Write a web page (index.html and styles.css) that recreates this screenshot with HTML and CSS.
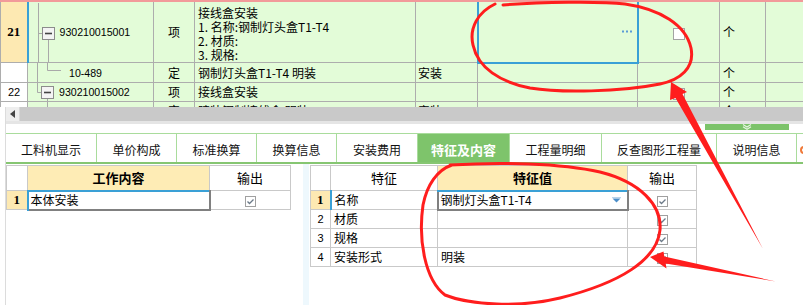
FILE: index.html
```html
<!DOCTYPE html>
<html>
<head>
<meta charset="utf-8">
<link rel="stylesheet" href="styles.css">
</head>
<body>
<div class="app">
  <div class="grid-wrap">
    <table class="grid">
      <colgroup>
        <col style="width:27px"><col style="width:126px"><col style="width:41px"><col style="width:221px"><col style="width:62px"><col style="width:160px"><col style="width:82px"><col style="width:46px"><col style="width:38px">
      </colgroup>
      <tr class="h60">
        <td class="num cur">21</td>
        <td class="tree"><div class="tc">
          <svg class="tl" width="31" height="59" viewBox="0 0 31 59">
            <line x1="9.5" y1="0" x2="9.5" y2="59"/>
            <line x1="9.5" y1="30.5" x2="13" y2="30.5"/>
            <line x1="19.5" y1="36" x2="19.5" y2="59"/>
            <rect class="bx" x="13.5" y="24.5" width="12" height="12"/>
            <line class="mn" x1="16" y1="30.5" x2="23" y2="30.5"/>
          </svg><span class="code">930210015001</span></div></td>
        <td class="ctr">项</td>
        <td class="desc"><div class="dl">接线盒安装</div><div class="dl">1. 名称:钢制灯头盒T1-T4</div><div class="dl">2. 材质:</div><div class="dl">3. 规格:</div></td>
        <td></td>
        <td class="sel"><div class="dots"><svg width="12" height="3" viewBox="0 0 12 3"><rect x="0" y="0.5" width="2" height="2"/><rect x="4" y="0.5" width="2" height="2"/><rect x="8" y="0.5" width="2" height="2"/></svg></div></td>
        <td class="ctr"><span class="cb0"></span></td>
        <td>个</td>
        <td></td>
      </tr>
      <tr class="h20">
        <td class="num"></td>
        <td class="tree"><div class="tc">
          <svg class="tl" width="41" height="19" viewBox="0 0 41 19">
            <line x1="9.5" y1="0" x2="9.5" y2="19"/>
            <line x1="19.5" y1="0" x2="19.5" y2="7.5"/>
            <line x1="19.5" y1="7.5" x2="33" y2="7.5"/>
          </svg><span class="code">10-489</span></div></td>
        <td class="ctr">定</td>
        <td>钢制灯头盒T1-T4 明装</td>
        <td class="pl2">安装</td>
        <td></td>
        <td></td>
        <td>个</td>
        <td></td>
      </tr>
      <tr class="h19">
        <td class="num plain">22</td>
        <td class="tree"><div class="tc">
          <svg class="tl" width="31" height="18" viewBox="0 0 31 18">
            <line x1="9.5" y1="0" x2="9.5" y2="9.5"/>
            <line x1="9.5" y1="9.5" x2="13" y2="9.5"/>
            <line x1="19.5" y1="15" x2="19.5" y2="18"/>
            <rect class="bx" x="13.5" y="3.5" width="12" height="12"/>
            <line class="mn" x1="16" y1="9.5" x2="23" y2="9.5"/>
          </svg><span class="code">930210015002</span></div></td>
        <td class="ctr">项</td>
        <td>接线盒安装</td>
        <td></td>
        <td></td>
        <td class="ctr"><span class="cb0"></span></td>
        <td>个</td>
        <td></td>
      </tr>
      <tr class="h19">
        <td class="num"></td>
        <td class="tree"><div class="tc">
          <svg class="tl" width="41" height="18" viewBox="0 0 41 18">
            <line x1="19.5" y1="0" x2="19.5" y2="18"/>
          </svg><span class="code">10-490</span></div></td>
        <td class="ctr">定</td>
        <td>暗装钢制接线盒 明装</td>
        <td class="pl2">安装</td>
        <td></td>
        <td></td>
        <td>个</td>
        <td></td>
      </tr>
    </table>
  </div>

  <div class="lower">
    <div class="hscroll">
      <span class="sbtn"><svg width="5" height="8" viewBox="0 0 5 8"><path d="M5 0 L0 4 L5 8 Z"/></svg></span>
      <span class="track"></span>
    </div>
    <div class="band"></div>
    <div class="thumb-row">
      <span class="thumb"><svg width="10" height="6" viewBox="0 0 10 6"><polyline points="1,0.5 5,3 9,0.5"/><polyline points="1,2.8 5,5.3 9,2.8"/></svg></span>
    </div>

    <div class="tabs">
      <div class="tab w91">工料机显示</div>
      <div class="tab w80">单价构成</div>
      <div class="tab w80">标准换算</div>
      <div class="tab w80">换算信息</div>
      <div class="tab w81">安装费用</div>
      <div class="tab w92 active">特征及内容</div>
      <div class="tab w92">工程量明细</div>
      <div class="tab w115">反查图形工程量</div>
      <div class="tab w80">说明信息</div>
      <div class="tab last"><span class="oc"></span></div>
    </div>

    <div class="panels">
      <div class="panel left">
        <table class="sub">
          <colgroup><col style="width:21px"><col style="width:182px"><col style="width:81px"></colgroup>
          <tr class="hd">
            <td></td>
            <td class="yl b13">工作内容</td>
            <td class="ctr t13">输出</td>
          </tr>
          <tr class="rw">
            <td class="rn cur">1</td>
            <td class="edit">本体安装</td>
            <td class="ctr"><span class="cb"><svg width="11" height="11" viewBox="0 0 11 11"><rect x="0.5" y="0.5" width="10" height="10"/><path d="M2.5 5.5 L4.5 7.5 L8.5 3.5"/></svg></span></td>
          </tr>
        </table>
      </div>
      <div class="splitter"></div>
      <div class="panel right">
        <table class="sub">
          <colgroup><col style="width:20px"><col style="width:107px"><col style="width:190px"><col style="width:69px"></colgroup>
          <tr class="hd">
            <td></td>
            <td class="ctr t13">特征</td>
            <td class="yl b13">特征值</td>
            <td class="ctr t13">输出</td>
          </tr>
          <tr class="rw">
            <td class="rn cur">1</td>
            <td>名称</td>
            <td class="edit gl"><div class="dd"><span>钢制灯头盒T1-T4</span><svg width="9" height="6" viewBox="0 0 9 6"><rect x="0" y="0" width="9" height="1" class="ln"/><path d="M0.5 1.5 L8.5 1.5 L4.5 5.5 Z"/></svg></div></td>
            <td class="ctr"><span class="cb"><svg width="11" height="11" viewBox="0 0 11 11"><rect x="0.5" y="0.5" width="10" height="10"/><path d="M2.5 5.5 L4.5 7.5 L8.5 3.5"/></svg></span></td>
          </tr>
          <tr class="rw">
            <td class="rn">2</td>
            <td>材质</td>
            <td></td>
            <td class="ctr"><span class="cb"><svg width="11" height="11" viewBox="0 0 11 11"><rect x="0.5" y="0.5" width="10" height="10"/><path d="M2.5 5.5 L4.5 7.5 L8.5 3.5"/></svg></span></td>
          </tr>
          <tr class="rw">
            <td class="rn">3</td>
            <td>规格</td>
            <td></td>
            <td class="ctr"><span class="cb"><svg width="11" height="11" viewBox="0 0 11 11"><rect x="0.5" y="0.5" width="10" height="10"/><path d="M2.5 5.5 L4.5 7.5 L8.5 3.5"/></svg></span></td>
          </tr>
          <tr class="rw">
            <td class="rn">4</td>
            <td>安装形式</td>
            <td>明装</td>
            <td class="ctr"><span class="cb"><svg width="11" height="11" viewBox="0 0 11 11"><rect x="0.5" y="0.5" width="10" height="10"/><path d="M2.5 5.5 L4.5 7.5 L8.5 3.5"/></svg></span></td>
          </tr>
        </table>
      </div>
    </div>
  </div>

  <svg class="annot" width="803" height="305" viewBox="0 0 803 305">
    <path class="ring" d="M503,5 C540,2 600,1 625,4 C660,9 686,25 691,48 C695,68 680,80 660,84 C620,92 560,93 530,88 C500,82 478,68 473,45 C469,28 478,12 495,4"/>
    <polygon class="arr" points="671,82 687,92 682.5,94 763,249 675.5,98 670,100"/>
    <path class="ring" d="M450,165 C500,162 560,163 600,172 C640,182 662,205 660,230 C657,260 620,283 560,298 C520,308 470,305 445,295 C425,280 418,240 423,205 C427,185 437,170 452,165"/>
    <polygon class="arr" points="650,257 663.5,251.5 664.3,256.6 776,281.5 665.7,263.4 666.5,268.5"/>
  </svg>
</div>
</body>
</html>
```

FILE: styles.css
```css
* { box-sizing: border-box; }
html, body { margin: 0; padding: 0; background: #fff; }
body { font-family: "Noto Sans CJK SC", "Noto Sans", sans-serif; font-size: 12px; color: #000; }

.app { position: relative; width: 803px; height: 305px; overflow: hidden; background: #fff; }

/* top grid */
.grid-wrap { height: 107px; overflow: hidden; border-top: 2px solid #f29a9a; }
.grid { border-collapse: collapse; table-layout: fixed; width: 803px; }
.grid td {
  border: 1px solid #adadad; background: #e3fcd8; padding: 0 0 0 3px;
  white-space: nowrap; overflow: hidden; font-size: 12px; line-height: 16px; vertical-align: middle;
}
.grid tr:first-child td { border-top: none; }
.h60 { height: 60px; }
.h20 { height: 20px; }
.h19 { height: 19px; }
.grid td.num { background: #fff; padding: 0; text-align: center; font-family: "Liberation Sans", sans-serif; font-size: 11px; }
.grid td.num.cur { background: #fde9b2; border-right: 2px solid #3aa0d6; font-family: "Liberation Serif", serif; font-weight: bold; font-size: 13px; }
.grid td.ctr { text-align: center; padding: 0; }
.grid td.pl2 { padding-left: 2px; }
.grid td.tree { padding: 0; }
.tc { display: flex; align-items: center; }
.tl { display: block; flex: none; }
.tl line { stroke: #a9a9a9; stroke-width: 1; }
.tl .bx { fill: #f4f4f4; stroke: #8c8c8c; stroke-width: 1; }
.tl .mn { stroke: #444; stroke-width: 1.6; }
.code { font-family: "Liberation Sans", sans-serif; font-size: 10.6px; }
.grid td.desc { vertical-align: top; padding-top: 4px; }
.dl { height: 14px; line-height: 14px; display: flex; align-items: center; }
.grid td.sel { border: 2px solid #3aa0d6; }
.dots { display: flex; justify-content: flex-end; padding-right: 3px; }
.dots svg { display: block; fill: #5b9bd6; }
.cb0 { display: inline-block; width: 12px; height: 12px; background: #fff; border: 1px solid #a3a3a3; vertical-align: middle; }

/* lower */
.lower { margin-left: 5px; border-left: 1px solid #dcdcdc; }
.hscroll { display: flex; height: 14px; background: #c9c9c9; }
.sbtn { width: 14px; display: flex; align-items: center; justify-content: center; background: #eeeeee; border-right: 1px solid #d8d8d8; }
.sbtn svg { fill: #444; }
.track { flex: 1; }
.band { height: 3px; background: #e5e5e5; }
.thumb-row { height: 9px; display: flex; align-items: flex-start; }
.thumb { margin-left: 699px; width: 84px; height: 6px; background: #7cc36a; display: flex; justify-content: center; }
.thumb svg { display: block; fill: none; stroke: #e6f5e0; stroke-width: 1.2; }

.tabs { display: flex; height: 31px; border-top: 1px solid #a9dc9c; border-bottom: 2px solid #86c672; }
.tab { flex: none; border-right: 1px solid #a9dc9c; display: flex; align-items: center; justify-content: center; font-size: 12px; padding-top: 3px; color: #111; }
.w91 { width: 91px; } .w80 { width: 80px; } .w81 { width: 81px; } .w92 { width: 92px; } .w115 { width: 115px; }
.tab.active { background: #7ec46b; color: #fff; font-weight: bold; font-size: 13px; }
.tab.last { border-right: none; flex: 1; justify-content: flex-start; padding-left: 3px; }
.oc { width: 8px; height: 8px; border-radius: 50%; border: 2px solid #f07a3a; }

.panels { display: flex; height: 141px; }
.panel { padding-top: 1px; background: #fff; }
.panel.left { width: 297px; }
.splitter { width: 6px; background: #eef8fd; }
.panel.right { flex: 1; padding-left: 1px; }

.sub { border-collapse: collapse; table-layout: fixed; }
.sub td { border: 1px solid #c9c9c9; padding: 0 0 0 3px; white-space: nowrap; overflow: hidden; font-size: 12px; line-height: 16px; vertical-align: middle; background: #fff; }
.sub .hd { height: 25px; }
.sub .rw { height: 19px; }
.sub td.ctr { text-align: center; padding: 0; }
.sub td.yl { background: #feecb5; text-align: center; padding: 0; }
.sub td.b13 { font-weight: bold; font-size: 13px; }
.sub td.t13 { font-size: 13px; }
.sub td.rn { text-align: center; padding: 0; font-family: "Liberation Sans", sans-serif; font-size: 11px; }
.sub td.rn.cur { background: #fde9b2; border-right: 2px solid #3aa0d6; font-family: "Liberation Serif", serif; font-weight: bold; font-size: 13px; }
.sub td.edit { border-top: 2px solid #3aa0d6; border-right: 2px solid #808080; border-bottom: 2px solid #808080; padding-left: 2px; }
.sub td.edit.gl { border-left: 2px solid #808080; }
.cb { display: inline-flex; vertical-align: middle; }
.cb svg { display: block; }
.cb rect { fill: #fff; stroke: #a0a0a0; }
.cb path { fill: none; stroke: #6c7a88; stroke-width: 1.3; }
.dd { display: flex; align-items: center; justify-content: space-between; padding-right: 6px; }
.dd svg { display: block; }
.dd path { fill: #4b8ec9; }
.dd .ln { fill: #b8d3ea; }

/* hand-drawn annotations on top */
.annot { position: absolute; left: 0; top: 0; pointer-events: none; }
.annot .ring { fill: none; stroke: #ff1d1d; stroke-width: 3; stroke-linecap: round; stroke-linejoin: round; }
.annot .arr { fill: #ff1d1d; }
```
